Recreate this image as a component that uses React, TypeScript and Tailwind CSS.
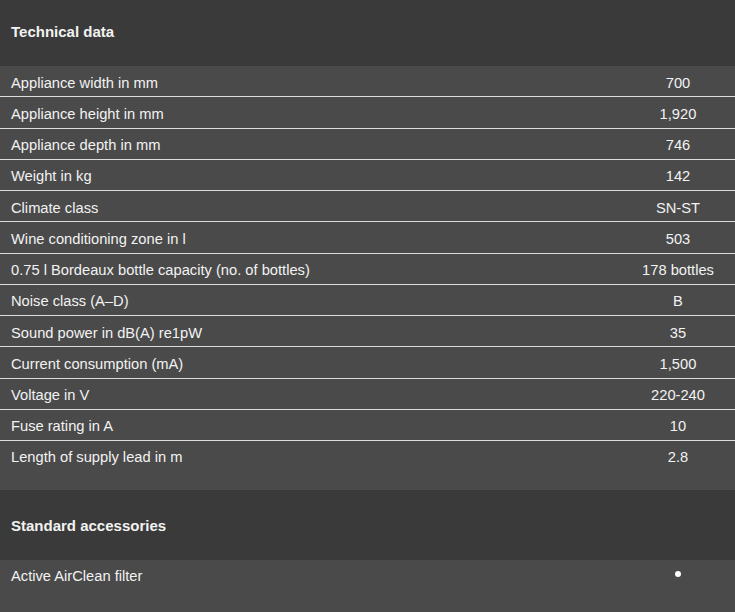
import React from "react";

const technical: [string, string][] = [
  ["Appliance width in mm", "700"],
  ["Appliance height in mm", "1,920"],
  ["Appliance depth in mm", "746"],
  ["Weight in kg", "142"],
  ["Climate class", "SN-ST"],
  ["Wine conditioning zone in l", "503"],
  ["0.75 l Bordeaux bottle capacity (no. of bottles)", "178 bottles"],
  ["Noise class (A–D)", "B"],
  ["Sound power in dB(A) re1pW", "35"],
  ["Current consumption (mA)", "1,500"],
  ["Voltage in V", "220-240"],
  ["Fuse rating in A", "10"],
  ["Length of supply lead in m", "2.8"],
];

function Row({
  label,
  value,
  last,
}: {
  label: string;
  value: React.ReactNode;
  last?: boolean;
}) {
  return (
    <div
      className={`flex bg-[#4a4a4a] text-[14.7px] text-[#f2f2f2] ${
        last
          ? "h-[49px] items-start pt-[5px]"
          : "h-[31.25px] items-center pt-[3px] border-b border-[#dedede]"
      }`}
    >
      <div className="flex-1 pl-[11px]">{label}</div>
      <div className="w-[114px] text-center">{value}</div>
    </div>
  );
}

export default function App() {
  return (
    <div
      className="w-[735px] h-[612px] overflow-hidden bg-[#4a4a4a]"
      style={{ fontFamily: '"Liberation Sans", Arial, sans-serif' }}
    >
      <div className="h-[66px] bg-[#3a3a3a] flex items-center pb-[2px] px-[11px]">
        <h2 className="text-[15px] font-bold text-[#f2f2f2]">Technical data</h2>
      </div>
      {technical.map(([label, value], i) => (
        <Row key={label} label={label} value={value} last={i === technical.length - 1} />
      ))}
      <div className="h-[70px] bg-[#3a3a3a] flex items-center pt-[2px] px-[11px]">
        <h2 className="text-[15px] font-bold text-[#f2f2f2]">Standard accessories</h2>
      </div>
      <div className="h-[52px] flex items-start pt-[5px] bg-[#4a4a4a] text-[14.7px] text-[#f2f2f2]">
        <div className="flex-1 pl-[11px]">Active AirClean filter</div>
        <div className="w-[114px] flex justify-center pt-[6px]">
          <span className="block w-[6px] h-[6px] rounded-full bg-white" />
        </div>
      </div>
    </div>
  );
}
